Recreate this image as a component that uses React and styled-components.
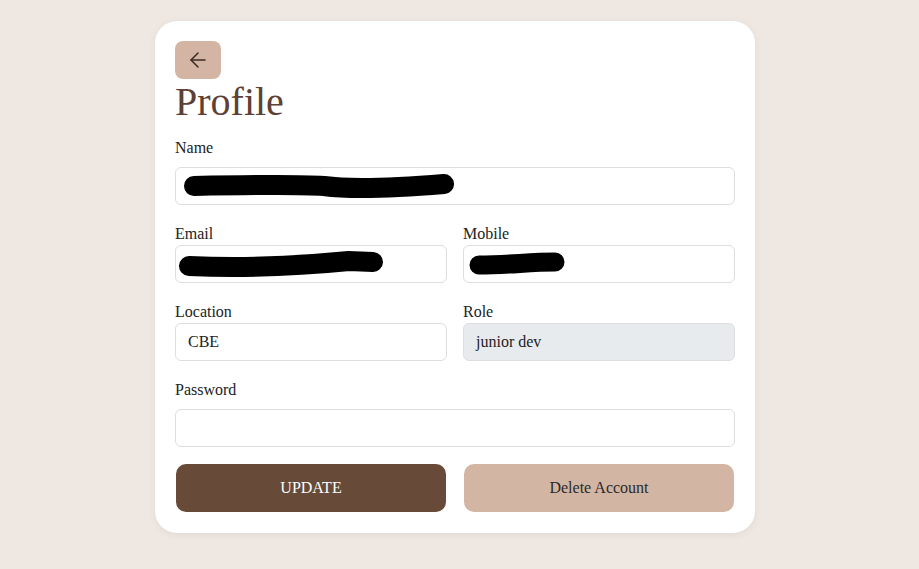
import React from 'react';
import styled, { createGlobalStyle } from 'styled-components';
import { ArrowLeft } from 'lucide-react';

const GlobalStyle = createGlobalStyle`
  body {
    margin: 0;
    background: #efe7e1;
    font-family: 'Liberation Serif', 'Times New Roman', serif;
  }
`;

const Page = styled.div`
  display: flex;
  justify-content: center;
  padding: 21px 9px 36px 0;
`;

const Card = styled.div`
  width: 600px;
  box-sizing: border-box;
  background: #fff;
  border-radius: 22px;
  padding: 20px 20px 21px;
  box-shadow: 0 2px 8px rgba(0, 0, 0, 0.06);
`;

const BackButton = styled.button`
  width: 46px;
  height: 38px;
  border: none;
  border-radius: 8px;
  background: #d4b5a3;
  color: #3a2a22;
  display: flex;
  align-items: center;
  justify-content: center;
  padding: 0;
`;

const Title = styled.h1`
  margin: 0 0 14px;
  font-size: 40px;
  font-weight: 400;
  line-height: 46px;
  color: #5e4034;
`;

const Row = styled.div`
  display: grid;
  grid-template-columns: 1fr 1fr;
  gap: 16px;
  margin-bottom: 20px;
`;

const Field = styled.div`
  display: flex;
  flex-direction: column;
  margin-bottom: ${(p) => (p.$last ? '17px' : '20px')};
  ${Row} & {
    margin-bottom: 0;
  }
`;

const Label = styled.label`
  font-size: 16px;
  line-height: 18px;
  color: #222;
  margin-bottom: ${(p) => (p.$wide ? '10px' : '2px')};
`;

const Box = styled.div`
  height: 38px;
  box-sizing: border-box;
  border: 1px solid #dedee2;
  border-radius: 6px;
  background: ${(p) => (p.$disabled ? '#e8ebee' : '#fff')};
  display: flex;
  align-items: center;
  padding: 0 12px;
  font-size: 16px;
  color: #222;
  overflow: hidden;
`;

const Scribble = styled.svg`
  display: block;
  margin-left: ${(p) => p.$offset || 0}px;
`;

const Buttons = styled.div`
  display: grid;
  grid-template-columns: 1fr 1fr;
  gap: 18px;
  padding: 0 1px;
`;

const ActionButton = styled.button`
  height: 48px;
  border: none;
  border-radius: 10px;
  font-family: 'Liberation Serif', 'Times New Roman', serif;
  font-size: 16px;
  background: ${(p) => (p.$primary ? '#684a39' : '#d3b5a3')};
  color: ${(p) => (p.$primary ? '#fff' : '#2a2a2a')};
`;

export default function App() {
  return (
    <>
      <GlobalStyle />
      <Page>
        <Card>
          <BackButton aria-label="back">
            <ArrowLeft size={24} strokeWidth={1.5} />
          </BackButton>
          <Title>Profile</Title>

          <Field>
            <Label $wide>Name</Label>
            <Box>
              <Scribble width="270" height="26" viewBox="0 0 270 26" $offset={-4}>
                <path
                  d="M10 13 C 60 12, 110 11, 140 13 C 170 17, 210 15, 260 11"
                  stroke="#000"
                  strokeWidth="20"
                  strokeLinecap="round"
                  fill="none"
                />
              </Scribble>
            </Box>
          </Field>

          <Row>
            <Field>
              <Label>Email</Label>
              <Box>
                <Scribble width="206" height="28" viewBox="0 0 206 28" $offset={-9}>
                  <path
                    d="M10 16 C 60 18, 110 17, 170 11 L 194 12"
                    stroke="#000"
                    strokeWidth="20"
                    strokeLinecap="round"
                    fill="none"
                  />
                </Scribble>
              </Box>
            </Field>
            <Field>
              <Label>Mobile</Label>
              <Box>
                <Scribble width="96" height="26" viewBox="0 0 96 26" $offset={-7}>
                  <path
                    d="M10 14 C 40 14, 60 11, 86 11"
                    stroke="#000"
                    strokeWidth="19"
                    strokeLinecap="round"
                    fill="none"
                  />
                </Scribble>
              </Box>
            </Field>
          </Row>

          <Row>
            <Field>
              <Label>Location</Label>
              <Box>CBE</Box>
            </Field>
            <Field>
              <Label>Role</Label>
              <Box $disabled>junior dev</Box>
            </Field>
          </Row>

          <Field $last>
            <Label $wide>Password</Label>
            <Box />
          </Field>

          <Buttons>
            <ActionButton $primary>UPDATE</ActionButton>
            <ActionButton>Delete Account</ActionButton>
          </Buttons>
        </Card>
      </Page>
    </>
  );
}
